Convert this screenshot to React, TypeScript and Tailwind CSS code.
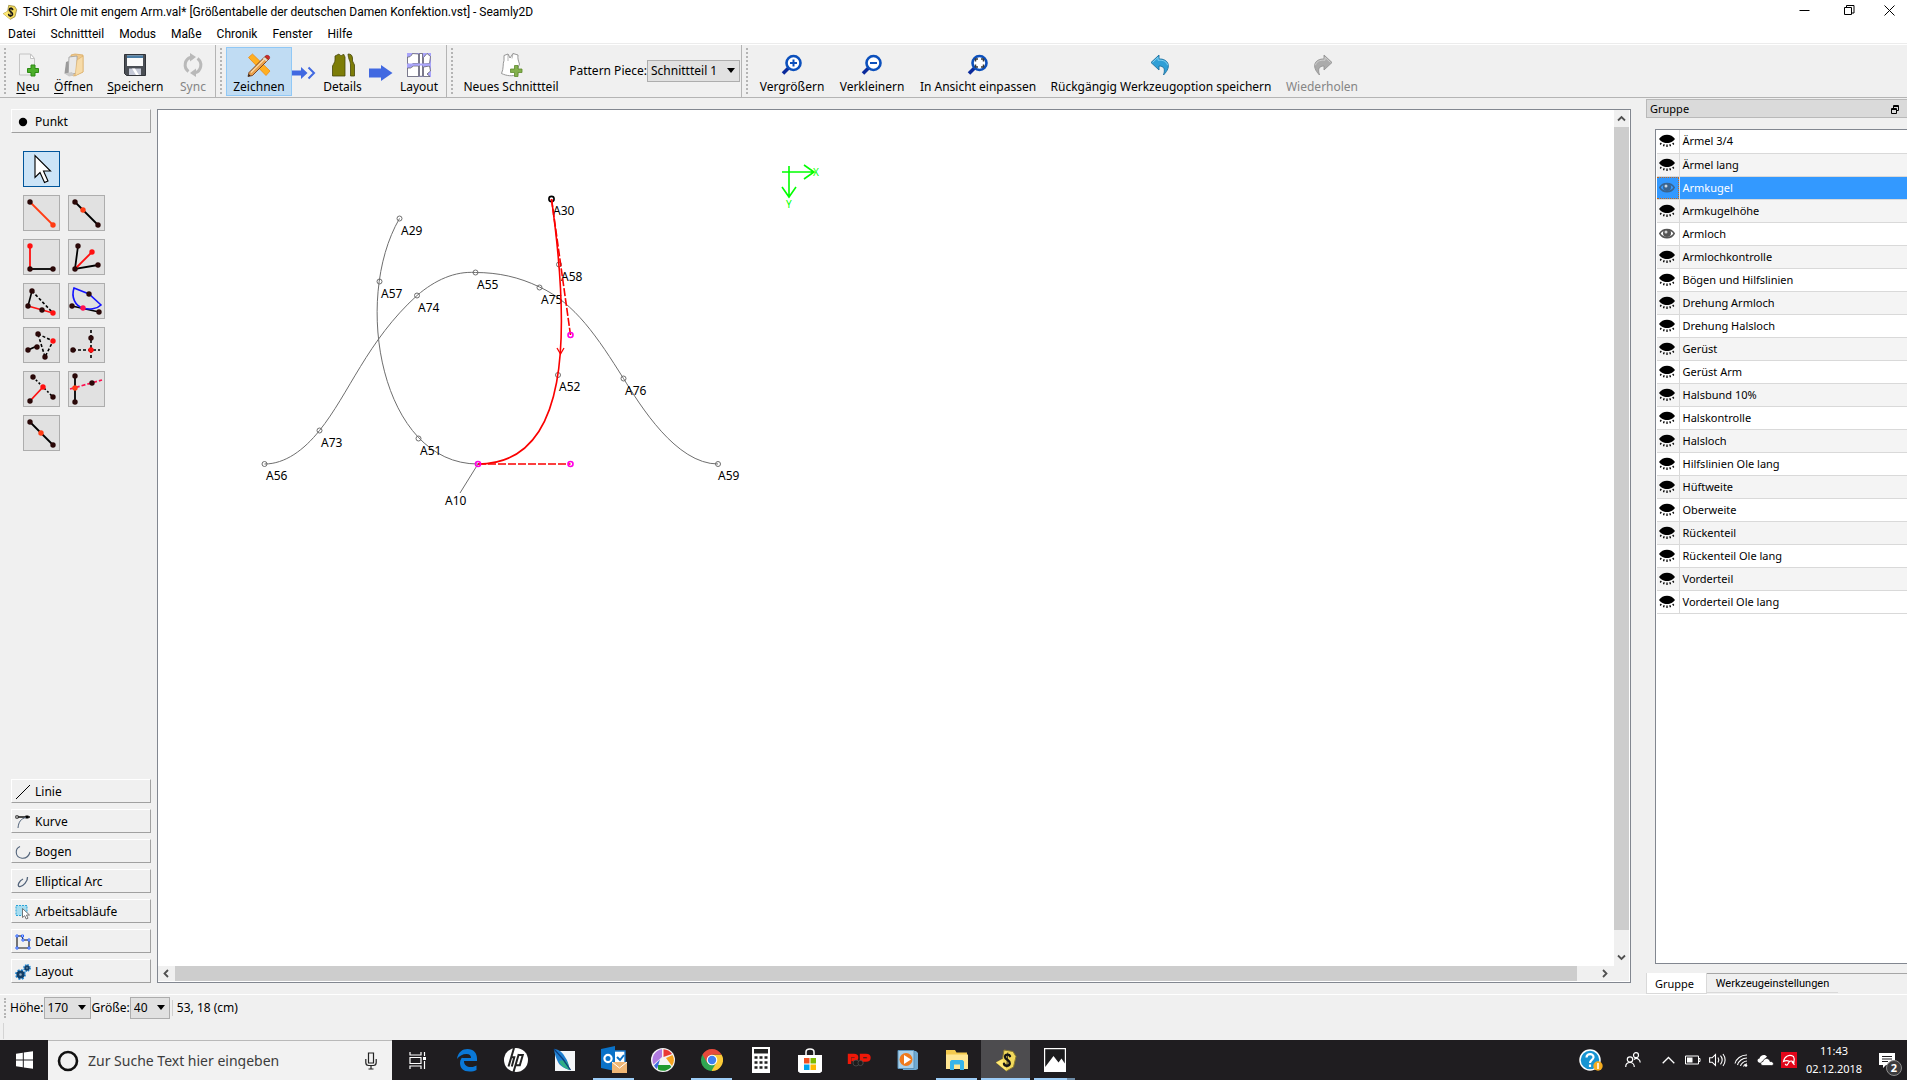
import React from 'react';

type Kids = { children: React.ReactNode };

const RED = '#ff1010';
const DOT = '#2a0808';

/* ---------- small helpers ---------- */

function Svg({ w, h, vb, children }: Kids & { w: number; h: number; vb?: string }) {
  return (
    <svg width={w} height={h} viewBox={vb ?? `0 0 ${w} ${h}`} fill="none" aria-hidden="true" className="shrink-0">
      {children}
    </svg>
  );
}

function Grip({ short = false }: { short?: boolean }) {
  return (
    <span
      className={
        (short ? 'h-5' : 'h-[46px]') +
        ' w-0 shrink-0 border-l-2 border-dotted border-[#b4b4b4]'
      }
    />
  );
}

function Combo({ label, value, options, width }: { label: string; value: string; options: string[]; width: string }) {
  return (
    <label className="flex items-center whitespace-nowrap">
      <span>{label}</span>
      <span className="relative">
        <select
          defaultValue={value}
          className={width + ' block h-[22px] appearance-none rounded-none border border-[#adadad] bg-[#e1e1e1] pl-[3px] text-[12px] leading-4 outline-none'}
        >
          {options.map((o) => (
            <option key={o}>{o}</option>
          ))}
        </select>
        <span className="pointer-events-none absolute top-2 right-[5px] border-x-4 border-t-[5px] border-x-transparent border-t-black" />
      </span>
    </label>
  );
}

/* ---------- logo ---------- */

function SeamlyLogo({ size }: { size: number }) {
  return (
    <Svg w={size} h={size} vb="0 0 24 24">
      <path d="M10 2l9 1.500 3 5-2.500 10.500-7 4-10.500-8.500 6.500-3.500z" fill="#f2d95c" stroke="#8a7a30" strokeWidth="1" />
      <path d="M2 14.500l6.500-3.500 4 12z" fill="#ffe873" />
      <path d="M16 8.200c-.6-2-4.800-2.400-5 .6-.2 2.800 5.200 3.400 4.800 6.600-.4 3.200-5.400 3-5.800.4" stroke="#151515" strokeWidth="2.400" strokeLinecap="round" />
      <path d="M13.800 4.500l-1 15" stroke="#151515" strokeWidth=".8" />
    </Svg>
  );
}

/* ---------- toolbar icons ---------- */

const NewIcon = () => (
  <Svg w={24} h={24}>
    <path d="M3.500 1h11l4 4.500V22h-15z" fill="#f1f1f1" stroke="#c4c4c4" />
    <path d="M14.500 1v4.500h4z" fill="#fff" stroke="#c4c4c4" />
    <path d="M15 12h4v3.500h3.500v4H19V23h-4v-3.500h-3.500v-4H15z" fill="#4caf2a" stroke="#2f8a16" />
  </Svg>
);
const OpenIcon = () => (
  <Svg w={24} h={24}>
    <path d="M9 2l4-1 8 1v17l-9 4-3-1z" fill="#f0c98c" stroke="#d9ab63" strokeWidth=".8" />
    <path d="M7 4l8-1v17l-9 2z" fill="#e9e9e9" stroke="#9c9c9c" strokeWidth=".8" />
    <path d="M4 9l2.500-1v14L2.500 20.500z" fill="#9a9a9a" />
    <path d="M2.500 20.500L10 19l2 3.500-5 1z" fill="#c9c9c9" />
    <path d="M15 7l6-4v16l-8 4z" fill="#f7dba8" stroke="#d9ab63" strokeWidth=".6" />
  </Svg>
);
const SaveIcon = () => (
  <Svg w={24} h={24}>
    <path d="M1.500 1.500h21v21h-19l-2-2z" fill="#4b4f55" stroke="#303338" />
    <path d="M4 2.500h16V13H4z" fill="#fafafa" />
    <path d="M4 2.500h16V5H4z" fill="#4a7da5" />
    <path d="M6 15.500h12V22H6z" fill="#c6cad8" />
    <path d="M9 15.500h3l4 6.500h-3z" fill="#fff" />
  </Svg>
);
const SyncIcon = () => (
  <Svg w={24} h={24}>
    <path d="M7.500 18.500A8 8 0 0 1 10 4.300" stroke="#b9b9b9" strokeWidth="3" />
    <path d="M16.500 5.500A8 8 0 0 1 14 19.700" stroke="#b9b9b9" strokeWidth="3" />
    <path d="M9 0l6 4-6 4.500zM15 15.500L9 20l6 4z" fill="#b9b9b9" />
  </Svg>
);
const DrawIcon = () => (
  <Svg w={24} h={24}>
    <path d="M1.500 4.500l4-3.500L23 18l-4 4.500z" fill="#ffb022" stroke="#f08a10" strokeWidth=".8" />
    <path d="M2 19.500L18 3.500l3.500 3L5.500 22.500 1 23.500z" fill="#e8a04c" stroke="#6e3a1e" strokeWidth=".9" />
    <path d="M4 19.500L18.500 5" stroke="#fce0b0" strokeWidth="1.200" />
    <path d="M18 3.500c1-2 5.500-1.500 4.500 2l-1 1z" fill="#d22a2a" stroke="#8d1717" strokeWidth=".6" />
    <path d="M16.500 4.800l3.500 3" stroke="#dcdcdc" strokeWidth="1.600" />
    <path d="M1 23.500l.8-2.500 1.800 1.800z" fill="#222" />
  </Svg>
);
const DoubleArrow = () => (
  <Svg w={24} h={14}>
    <path d="M0 4.500h9V1l6.500 6L9 13V9.500H0z" fill="#4169e1" />
    <path d="M16.500 1.500L22 7l-5.500 5.500" stroke="#4169e1" strokeWidth="2" />
  </Svg>
);
const SingleArrow = () => (
  <Svg w={24} h={16}>
    <path d="M0 3.500h12V0l11.500 8L12 16v-3.500H0z" fill="#4169e1" />
  </Svg>
);
const DetailsIcon = () => (
  <Svg w={24} h={24}>
    <path d="M1.500 23V13C2.500 11 4 9 4 7V3l4-2c1.500 2 3 2 4.500 0l1.500 3v19zM17 1c3 0 4 1 4.500 4v3l2 4v11h-4V12c0-4-2-5-2.500-11z" fill="#7d7d08" stroke="#47470a" strokeWidth=".8" />
  </Svg>
);
const LayoutIcon = () => (
  <Svg w={24} h={24}>
    <path d="M0 0h24v24H0z" fill="#aaa5fb" />
    <path d="M.5 4c2 .5 4-1 5-3.500L11.500 1v9.500H6c-1.500 2-3.500 1.500-5.500 0zM12.500.5h3v22.800h-3zM.5 15h3l3-2h5v10.500H.5zM16.500 4.500l3.500-4 3.500 3-1 7-6 .5zM16.500 14l6-1 1 5-3.500 3 3 2.500h-6.500z" fill="#fff" stroke="#55555a" strokeWidth=".7" />
    <path d="M.5 11.500h23" stroke="#aaa5fb" strokeWidth="2" />
  </Svg>
);
const PieceIcon = () => (
  <Svg w={24} h={24}>
    <path d="M5 2.500L9 1l2 4 3-4.500 5 1.500c-.5 4 .5 6 1.500 9-2 4-2 8-1.500 10.500-6 2-11 1.500-16.500-1C5 15 3.500 11 5 7.500z" fill="#fff" stroke="#8b8b8b" strokeWidth=".9" />
    <path d="M9 1v7M14 .5l-1 5" stroke="#9a9a9a" strokeWidth=".7" />
    <path d="M15.500 12.500h3.500V16h4v3.500h-4v4h-3.500v-4h-4V16h4z" fill="#83b04c" stroke="#5e8a2b" strokeWidth=".8" />
  </Svg>
);

function Magnifier({ children }: Kids) {
  return (
    <Svg w={22} h={22}>
      <path d="M7.500 14L2 19.500" stroke="#0a2a9c" strokeWidth="3.600" />
      <circle cx="12.500" cy="9" r="7" fill="#fff" stroke="#0c50bc" strokeWidth="2.600" />
      {children}
    </Svg>
  );
}
const ZoomIn = () => (
  <Magnifier>
    <path d="M9 9h7M12.500 5.500v7" stroke="#0c50bc" strokeWidth="2" />
  </Magnifier>
);
const ZoomOut = () => (
  <Magnifier>
    <path d="M9 9h7" stroke="#0c50bc" strokeWidth="2" />
  </Magnifier>
);
const ZoomFit = () => (
  <Magnifier>
    <path d="M8.500 7.500V5H11M14 5h2.500v2.500M16.500 10.500V13H14M11 13H8.500v-2.500" stroke="#3a3a3a" strokeWidth="1.500" />
  </Magnifier>
);
const UndoIcon = () => (
  <Svg w={22} h={22}>
    <path d="M1 8.500L9 1v4c8-.5 14 6.500 4.500 16 2-6 .5-9-4.500-9v4z" fill="#2f9fd6" stroke="#1c6f9f" strokeWidth=".9" />
    <path d="M2.500 8.500L8 3.300V6.200c6-.5 9 2 9.500 5" stroke="#7fd0f2" strokeWidth="1" />
  </Svg>
);
const RedoIcon = () => (
  <Svg w={22} h={22}>
    <path d="M21 8.500L13 1v4C5 4.500-1 11.500 8.500 21c-2-6-.5-9 4.500-9v4z" fill="#ababab" stroke="#939393" strokeWidth=".9" />
    <path d="M19.500 8.500L14 3.300V6.200C8 5.700 5 8.200 4.500 11.200" stroke="#cfcfcf" strokeWidth="1" />
  </Svg>
);

function ToolButton({ icon, label, width, disabled, active, mnemonic }: { icon: React.ReactNode; label: string; width: string; disabled?: boolean; active?: boolean; mnemonic?: boolean }) {
  return (
    <button
      type="button"
      disabled={disabled}
      aria-pressed={active}
      className={
        width +
        ' flex h-[49px] shrink-0 flex-col items-center justify-between border pt-[5px] whitespace-nowrap ' +
        (active ? 'border-[#90c8f6] bg-[#c0dcf3]' : 'border-transparent') +
        (disabled ? ' text-[#858585]' : '')
      }
    >
      <span className="flex h-6 items-center">{icon}</span>
      <span className="h-4 leading-4">
        {mnemonic ? (
          <>
            <span className="underline underline-offset-2">{label[0]}</span>
            {label.slice(1)}
          </>
        ) : (
          label
        )}
      </span>
    </button>
  );
}

/* ---------- left tool box ---------- */

type Pt = [number, number, string?];
function Dots({ pts }: { pts: Pt[] }) {
  return (
    <>
      {pts.map(([x, y, c], i) => (
        <circle key={i} cx={x} cy={y} r="2.700" fill={c ?? DOT} />
      ))}
    </>
  );
}

const pointTools: { name: string; art: React.ReactNode }[] = [
  {
    name: 'Punkt in Abstand und Winkel',
    art: (<><path d="M7 7l23 23" stroke="#ff3c14" strokeWidth="1.800" /><Dots pts={[[7, 7], [30, 30, '#ff3c14']]} /></>),
  },
  {
    name: 'Punkt auf Linie',
    art: (<><path d="M7 7l23 23" stroke="#000" strokeWidth="1.800" /><Dots pts={[[7, 7], [30, 30], [15, 15, '#ff3c14']]} /></>),
  },
  {
    name: 'Senkrechte',
    art: (<><path d="M7 30h23" stroke="#000" strokeWidth="1.800" /><path d="M7 7v23" stroke={RED} strokeWidth="1.800" /><Dots pts={[[7, 7, RED], [7, 30], [30, 30]]} /></>),
  },
  {
    name: 'Winkelhalbierende',
    art: (<><path d="M10 7L7 30l23-4" stroke="#000" strokeWidth="1.800" /><path d="M7 30l17-17" stroke={RED} strokeWidth="1.800" /><Dots pts={[[10, 7], [7, 30], [30, 26], [24, 13, RED]]} /></>),
  },
  {
    name: 'Schulterpunkt',
    art: (<><path d="M9 8L5 23" stroke="#000" strokeWidth="1.600" /><path d="M9 8l21 22" stroke="#000" strokeWidth="1.600" strokeDasharray="3 2" /><path d="M5 23l25 7" stroke={RED} strokeWidth="1.800" /><Dots pts={[[9, 8], [5, 23], [19, 27], [30, 30, RED]]} /></>),
  },
  {
    name: 'Schnittpunkt Bogen und Linie',
    art: (<><path d="M4 23l27 6" stroke="#000" strokeWidth="1.600" /><path d="M6 5l15 6 12 11c-4 4-12 5-18 3C7 23 3 14 6 5z" stroke="#1414ff" strokeWidth="1.600" /><Dots pts={[[4, 23], [31, 29], [21, 11], [15, 25, '#ff1050']]} /></>),
  },
  {
    name: 'Dreieck',
    art: (<><path d="M5 23l9-4" stroke="#000" strokeWidth="1.800" /><path d="M15 7l15 7-8 16z" stroke="#000" strokeWidth="1.600" strokeDasharray="3 2" /><Dots pts={[[5, 23], [14, 20], [15, 7], [22, 30], [30, 14, RED]]} /></>),
  },
  {
    name: 'Schnittpunkt XY',
    art: (<><path d="M5 23h27M23 3v29" stroke="#000" strokeWidth="1.600" strokeDasharray="3 2" /><Dots pts={[[5, 23], [23, 11], [23, 23, RED]]} /></>),
  },
  {
    name: 'Lotpunkt',
    art: (<><path d="M10 6l20 20" stroke="#000" strokeWidth="1.600" strokeDasharray="2 2" /><path d="M7 30l13-14" stroke={RED} strokeWidth="1.800" /><Dots pts={[[10, 6], [30, 26], [7, 30], [20, 16, RED]]} /></>),
  },
  {
    name: 'Schnittpunkt Linie und Achse',
    art: (<><path d="M7 5v26" stroke="#000" strokeWidth="1.800" /><path d="M2 18l32-9" stroke="#ff1050" strokeWidth="1.800" strokeDasharray="4 2" /><Dots pts={[[7, 5], [7, 31], [24, 12], [7, 17, '#ff3c14']]} /></>),
  },
  {
    name: 'Mittelpunkt',
    art: (<><path d="M7 7l23 23" stroke="#000" strokeWidth="1.800" /><Dots pts={[[7, 7], [30, 30], [18, 18, '#ff3c14']]} /></>),
  },
];

const LineIcon = () => <Svg w={16} h={16}><path d="M1 15L15 1" stroke="#000" /></Svg>;
const CurveIcon = () => (
  <Svg w={16} h={16}><path d="M2 3h13" stroke="#000" strokeWidth="1.400" /><path d="M.8 1.800h2.400v2.400H.8z" fill="#fff" stroke="#000" strokeWidth=".8" /><path d="M10.500 1.500h3v3h-3z" fill="#000" /><path d="M11 3.500C6 4.500 3.500 8 3 14" stroke="#52637a" /></Svg>
);
const ArcIcon = () => <Svg w={16} h={16}><path d="M5 2.500C-.5 5 0 13.500 7 14.200c4 .3 7-2.200 8-6.200" stroke="#52637a" strokeWidth="1.100" /></Svg>;
const EllipticalIcon = () => <Svg w={16} h={16}><path d="M8 5C4.500 6.500 1.500 12 4.500 12.500 8 13 13 7 12.500 3" stroke="#52637a" strokeWidth="1.300" /></Svg>;
const OperationsIcon = () => (
  <Svg w={16} h={16}><path d="M1 1.500h11v10H1z" fill="#a5dcf0" stroke="#2aa3d8" strokeDasharray="2 1" /><path d="M7.500 4.500v9l2.200-1.800 1.500 3.300 1.800-.8-1.500-3.200h3z" fill="#fff" stroke="#555" strokeWidth=".8" /></Svg>
);
const DetailIcon = () => (
  <Svg w={16} h={16}><path d="M2 14V2h5l1 4h6v8z" stroke="#111" strokeWidth="1.100" /><path d="M1 1h2v2H1zM6.500 1h2v2h-2zM7 5h2v2H7zM13 5h2v2h-2zM13 13h2v2h-2zM1 13h2v2H1z" fill="#fff" stroke="#2b62ff" /></Svg>
);
const GearsIcon = () => (
  <Svg w={16} h={16}>
    <circle cx="5.500" cy="10.500" r="4.300" stroke="#1c86d6" strokeWidth="2.200" strokeDasharray="1.900 1.480" />
    <circle cx="5.500" cy="10.500" r="2.700" fill="#9ab" stroke="#123f68" strokeWidth="2.800" />
    <circle cx="12" cy="4" r="3" stroke="#1c86d6" strokeWidth="1.800" strokeDasharray="1.500 .85" />
    <circle cx="12" cy="4" r="1.700" fill="#9ab" stroke="#123f68" strokeWidth="1.900" />
  </Svg>
);
const PointIcon = () => <Svg w={16} h={16}><circle cx="8" cy="8" r="4.200" fill="#000" /></Svg>;

function SectionButton({ icon, label, open }: { icon: React.ReactNode; label: string; open?: boolean }) {
  return (
    <button
      type="button"
      aria-expanded={!!open}
      className="flex h-6 w-full shrink-0 items-center gap-1 border border-t-white border-r-[#a0a0a0] border-b-[#a0a0a0] border-l-white pt-px pl-[3px] whitespace-nowrap"
    >
      {icon}
      {label}
    </button>
  );
}

function ToolBox() {
  return (
    <aside className="flex w-[157px] shrink-0 flex-col pt-[11px] pr-1.5 pb-[11px] pl-[11px]">
      <SectionButton icon={<PointIcon />} label="Punkt" open />
      <div className="mt-[18px] grid grid-cols-[37px_37px] gap-2 pl-3">
        <button type="button" aria-label="Auswahl" className="col-span-2 flex h-9 w-[37px] items-center justify-center border border-[#00559b] bg-[#cce4f7]">
          <Svg w={20} h={30}>
            <path d="M3 1.500v22l5-5 4.500 10 3.500-1.600L11.500 17H18.500z" fill="#fff" stroke="#000" strokeWidth="1.100" />
          </Svg>
        </button>
        {pointTools.map((t) => (
          <button key={t.name} type="button" aria-label={t.name} className="flex h-9 w-[37px] items-center justify-center border border-[#adadad] bg-[#e1e1e1]">
            <svg width="35" height="34" viewBox="1 1 35 34" fill="none" aria-hidden="true">{t.art}</svg>
          </button>
        ))}
      </div>
      <div className="mt-auto flex flex-col gap-1.5">
        <SectionButton icon={<LineIcon />} label="Linie" />
        <SectionButton icon={<CurveIcon />} label="Kurve" />
        <SectionButton icon={<ArcIcon />} label="Bogen" />
        <SectionButton icon={<EllipticalIcon />} label="Elliptical Arc" />
        <SectionButton icon={<OperationsIcon />} label="Arbeitsabläufe" />
        <SectionButton icon={<DetailIcon />} label="Detail" />
        <SectionButton icon={<GearsIcon />} label="Layout" />
      </div>
    </aside>
  );
}

/* ---------- pattern drawing ---------- */

const patternPoints: [string, number, number, number, number][] = [
  ['A29', 399.5, 218.5, 401, 235],
  ['A57', 379.5, 281.5, 381, 298],
  ['A74', 417, 295.5, 418, 312],
  ['A55', 475.5, 272.5, 477, 289],
  ['A75', 539.5, 287.5, 541, 304],
  ['A58', 559, 264.5, 561, 281],
  ['A52', 558, 375, 559, 391],
  ['A76', 623.5, 378.5, 625, 395],
  ['A73', 319.5, 430.5, 321, 447],
  ['A51', 418.5, 438.5, 420, 455],
  ['A56', 264.5, 464, 266, 480],
  ['A59', 718, 464, 718, 480],
];

function Drawing() {
  return (
    <svg className="h-full w-full" fill="none" role="img" aria-label="Schnittzeichnung">
      <g transform="translate(-158 -110)">
        <g stroke="#6e6e6e" strokeWidth="1">
          <path d="M399.500 218.500C352 300 381 464 478 464" />
          <path d="M264.500 464C285 464 304 450 319.500 430.500C349 394 367 341 417 295.500C435 280 455 271 475.500 272.500C498 272.500 519 277 539.500 287C575 303 598 338 623.500 378.500C640 405 676 464 718 464" />
          <path d="M478 464L460 493" />
          {patternPoints.map(([n, x, y]) => (
            <circle key={n} cx={x} cy={y} r="2.500" />
          ))}
        </g>
        <g className="text-[12px]" fill="#000">
          {patternPoints.map(([n, , , tx, ty]) => (
            <text key={n} x={tx} y={ty}>{n}</text>
          ))}
          <text x="553" y="215">A30</text>
          <text x="445" y="505">A10</text>
        </g>
        <circle cx="551.500" cy="199" r="2.600" stroke="#000" strokeWidth="1.600" />
        <g stroke="#fa0000" strokeWidth="1.600">
          <path d="M551.500 199L570.500 335M478 464H570.500" strokeDasharray="8 2" />
          <path d="M551.500 199C570.500 335 570.500 464 478 464" />
          <path d="M557 348l3.500 6 3.500-6" strokeWidth="1.300" />
        </g>
        <g stroke="#ff00e6" strokeWidth="1.600">
          <circle cx="570.500" cy="335" r="2.500" />
          <circle cx="570.500" cy="464" r="2.500" />
          <circle cx="478" cy="464" r="2.500" />
        </g>
        <g stroke="#00ff00" strokeWidth="1.600">
          <path d="M782 172h32M804 165l10 7-10 7" />
          <path d="M789 166v31M782 187l7 10 7-10" />
        </g>
        <g className="text-[10px]" fill="#00ff00">
          <text x="813" y="176">X</text>
          <text x="786" y="208">Y</text>
        </g>
      </g>
    </svg>
  );
}

function ArrowGlyph({ d }: { d: string }) {
  return (
    <Svg w={9} h={9}>
      <path d={d} stroke="#505050" strokeWidth="1.800" />
    </Svg>
  );
}

function Canvas() {
  return (
    <section className="mt-[11px] mb-[11px] flex min-w-0 flex-1 flex-col border border-[#828790] bg-white">
      <div className="flex min-h-0 flex-1">
        <div className="min-w-0 flex-1">
          <Drawing />
        </div>
        <div className="mr-px flex w-[15px] shrink-0 flex-col bg-[#f0f0f0]">
          <button type="button" aria-label="Nach oben" className="flex h-[17px] items-center justify-center"><ArrowGlyph d="M1 6.500L4.500 3 8 6.500" /></button>
          <div className="flex-[803] bg-[#cdcdcd]" />
          <div className="flex-[19]" />
          <button type="button" aria-label="Nach unten" className="flex h-[17px] items-center justify-center"><ArrowGlyph d="M1 2.500L4.500 6 8 2.500" /></button>
        </div>
      </div>
      <div className="mr-px mb-px flex h-[15px] shrink-0 bg-[#f0f0f0] pr-4">
        <button type="button" aria-label="Nach links" className="flex w-[17px] items-center justify-center"><ArrowGlyph d="M6 1L2.500 4.500 6 8" /></button>
        <div className="flex-[1403] bg-[#cdcdcd]" />
        <div className="flex-[19]" />
        <button type="button" aria-label="Nach rechts" className="flex w-[17px] items-center justify-center"><ArrowGlyph d="M3 1l3.500 3.500L3 8" /></button>
      </div>
    </section>
  );
}

/* ---------- group dock ---------- */

const ClosedEye = () => (
  <Svg w={16} h={14}>
    <path d="M0 5C3.500-.8 12.500-.8 16 5c-.8 1.200-1.800 2-3 2.700C10 9.500 6 9.500 3 7.700 1.800 7 .8 6.200 0 5z" fill="#000" />
    <path d="M2.300 9L1.200 10.500M5.200 10.200L4.500 12.200M8 10.500V13M10.800 10.200l.7 2M13.700 9l1.100 1.500" stroke="#000" strokeWidth="1.300" />
  </Svg>
);
const OpenEye = ({ color }: { color: string }) => (
  <Svg w={16} h={14}>
    <path d="M.8 6.500C4 1 12 1 15.200 6.500 12 12 4 12 .8 6.500z" stroke={color} strokeWidth="1.500" />
    <circle cx="8" cy="6" r="4" fill={color} />
    <circle cx="7" cy="5" r="1.500" fill="#fff" fillOpacity=".75" />
  </Svg>
);

const groups = [
  'Ärmel 3/4', 'Ärmel lang', 'Armkugel', 'Armkugelhöhe', 'Armloch', 'Armlochkontrolle', 'Bögen und Hilfslinien',
  'Drehung Armloch', 'Drehung Halsloch', 'Gerüst', 'Gerüst Arm', 'Halsbund 10%', 'Halskontrolle', 'Halsloch',
  'Hilfslinien Ole lang', 'Hüftweite', 'Oberweite', 'Rückenteil', 'Rückenteil Ole lang', 'Vorderteil', 'Vorderteil Ole lang',
];

function GroupDock() {
  return (
    <aside className="ml-[15px] flex w-[261px] shrink-0 flex-col pt-px">
      <header className="flex h-[19px] shrink-0 items-center justify-between border border-r-0 border-[#b9b9b9] bg-[#dadada] pt-px pr-2 pl-[3px] text-[11px]">
        <h2>Gruppe</h2>
        <button type="button" aria-label="Andocken">
          <Svg w={8} h={9}>
            <path d="M2.500 3V.5h5v5H6M.5 3.500h5v5h-5z" stroke="#000" />
            <path d="M2 1.500h6M0 4.500h6" stroke="#000" />
          </Svg>
        </button>
      </header>
      <div className="mt-[11px] ml-[9px] flex-1 border border-r-0 border-[#828790] bg-white pl-px">
        <table className="w-full border-collapse text-[11px]">
          <tbody>
            {groups.map((g, i) => {
              const selected = g === 'Armkugel';
              const open = selected || g === 'Armloch';
              return (
                <tr
                  key={g}
                  aria-selected={selected}
                  className={'h-[23px] border-b border-[#d9d9d9] ' + (selected ? 'bg-[#3399ff] text-white' : i % 2 ? 'bg-[#f4f4f4]' : 'bg-white')}
                >
                  <td className="w-[22px] border-r border-[#d9d9d9] p-0">
                    <span className={'flex h-[22px] items-center pl-0.5 ' + (selected ? 'border border-l-0 border-dotted border-[#c06820]' : '')}>
                      {open ? <OpenEye color={selected ? '#3a648f' : '#555555'} /> : <ClosedEye />}
                    </span>
                  </td>
                  <td className="py-0 pr-0 pl-[3px] leading-4">{g}</td>
                </tr>
              );
            })}
          </tbody>
        </table>
      </div>
      <div role="tablist" className="mt-[9px] flex h-[21px] shrink-0 items-start border-t border-[#a6a6a6] text-[11px]">
        <button type="button" role="tab" aria-selected="true" className="-mt-px h-[21px] w-[61px] border border-t-0 border-[#d9d9d9] bg-white pt-0.5 pr-1 leading-4">Gruppe</button>
        <button type="button" role="tab" aria-selected="false" className="h-[19px] w-[131px] border-b border-[#d9d9d9] pt-px font-[Roboto,sans-serif] leading-4">Werkzeugeinstellungen</button>
      </div>
    </aside>
  );
}

/* ---------- taskbar ---------- */

const EdgeIcon = () => (
  <Svg w={22} h={24}>
    <path d="M1 11C2 4 6.500 1 11.500 1 17.500 1 21 5 21 10.500V13H8c0 4 3 6 7 6 2.500 0 4-.7 5.500-1.500V22c-2 1-4 1.500-7 1.500-6 0-9.500-3.500-9.500-8.500 0-3.500 2-6 4.500-7.500C7 8.500 6.500 9 6 10h9c0-2.500-1.500-4-4.500-4C6.500 6 3 8 1 11z" fill="#0a78d7" />
  </Svg>
);
const HpIcon = () => (
  <Svg w={24} h={24}>
    <circle cx="12" cy="12" r="12" fill="#fff" />
    <path d="M10 0L4.500 18.500M7 9.200h3.300L7.800 18.500M14.800 6L9.500 24M14.300 7h4.500l-3 10.300H12" stroke="#222" strokeWidth="2" />
  </Svg>
);
const FeatherIcon = () => (
  <Svg w={24} h={24}>
    <path d="M2 3h20v20H2z" fill="#f4f6f8" />
    <path d="M1 1c5 0 9 4 11 8 3 4 4 8 4.500 13C11 20 7 18 5 14 3 10 1.500 6 1 1z" fill="#1f7fd0" />
    <path d="M6 13c3-1 6-1 8 1 1.500 2 2 5 2.500 8C11 20 8 18 6 13z" fill="#2fae86" />
    <path d="M1 1c5 5 11 12 16.500 21" stroke="#0c3e80" strokeWidth="1.300" />
  </Svg>
);
const OutlookIcon = () => (
  <Svg w={26} h={28}>
    <path d="M12 5h12v13H12z" fill="#fff" stroke="#1a7cd0" strokeWidth="1.400" />
    <path d="M0 3l14-3v25L0 22z" fill="#0a72c8" />
    <circle cx="7" cy="12.500" r="3.600" stroke="#fff" strokeWidth="2.200" />
    <path d="M16 11l3 3 4-5" stroke="#0a72c8" strokeWidth="2" />
    <path d="M11 16h15v11H11z" fill="#f0b775" />
    <path d="M11 16l7.500 6 7.500-6" stroke="#fff" />
  </Svg>
);
const PicasaIcon = () => (
  <Svg w={24} h={24}>
    <circle cx="12" cy="12" r="12" fill="#f4f4f4" />
    <path d="M11 1.200V9L2.500 16.500A10.800 10.800 0 0 1 11 1.200z" fill="#b07ae0" />
    <path d="M12.500 1.200A10.800 10.800 0 0 1 21 6L12.500 9z" fill="#ea3a34" />
    <path d="M21.500 7a10.800 10.800 0 0 1-.5 11l-6-8z" fill="#f5a31f" />
    <path d="M20.300 19A10.800 10.800 0 0 1 7 21.600V17h12z" fill="#1f9a2e" />
    <path d="M6 21A10.800 10.800 0 0 1 3 17.500l6-6z" fill="#3d6de0" />
  </Svg>
);
const ChromeIcon = () => (
  <Svg w={22} h={24}>
    <path d="M11 12V6.500h9.500A11 11 0 0 1 10.500 23z" fill="#fbcb38" />
    <path d="M11 12L1.500 6.500A11 11 0 0 0 10.500 23l4.700-8.300z" fill="#30a652" />
    <path d="M1.500 6.500a11 11 0 0 1 19 0H11V12l-4.800 2.700z" fill="#e64a3c" />
    <circle cx="11" cy="12" r="5.300" fill="#fff" />
    <circle cx="11" cy="12" r="4.200" fill="#3f80f0" />
  </Svg>
);
const CalculatorIcon = () => (
  <Svg w={18} h={26}>
    <path d="M0 0h18v26H0z" fill="#fff" />
    <path d="M2 2h14v4.500H2z" fill="#222" />
    <path d="M2.500 10.500h13M2.500 15.500h13M2.500 20.500h13" stroke="#222" strokeWidth="2.600" strokeDasharray="3 2" />
  </Svg>
);
const StoreIcon = () => (
  <Svg w={24} h={25}>
    <path d="M8 7V4c0-4 8-4 8 0v3" stroke="#fff" strokeWidth="1.500" />
    <path d="M0 7h24v16.500l-2 1.500H2l-2-1.500z" fill="#fff" />
    <path d="M6 10h5.500v5.500H6z" fill="#f25022" /><path d="M12.500 10H18v5.500h-5.500z" fill="#7fba00" />
    <path d="M6 16.500h5.500V22H6z" fill="#00a4ef" /><path d="M12.500 16.500H18V22h-5.500z" fill="#ffb900" />
  </Svg>
);
const RpIcon = () => (
  <Svg w={24} h={14}>
    <path d="M2.500 11V2.500h4.500c3.500 0 3.500 4 0 4H4.500M7 6.500l4 4.500M14.500 11V2.500H19c4 0 4 4.500 0 4.500h-3" stroke="#f01808" strokeWidth="3.400" />
    <circle cx="9" cy="10" r="3" fill="#1c1c1c" stroke="#555" strokeWidth=".7" /><circle cx="13.500" cy="10" r="2.600" fill="#1c1c1c" stroke="#555" strokeWidth=".7" />
  </Svg>
);
const MediaIcon = () => (
  <Svg w={22} h={22}>
    <path d="M4 2h15l2 2v16l-2 1H6z" fill="#6fa9d0" /><path d="M1 1.500h16v18H1z" fill="#a8d0ea" stroke="#5b93bb" />
    <circle cx="9" cy="10.500" r="6.500" fill="#f07a1c" /><path d="M7 6v9l7-4.500z" fill="#fff" />
  </Svg>
);
const FolderIcon = () => (
  <Svg w={24} h={22}>
    <path d="M1 1h9l1.500 2.500H22V20H1z" fill="#f3c94e" /><path d="M1 5.500h22V20H1z" fill="#ffe693" />
    <path d="M5 21v-8.500l1.500-1.500h11l1.500 1.500V21h-4v-5.500H9V21z" fill="#38b4ea" />
  </Svg>
);
const PhotosIcon = () => (
  <Svg w={22} h={24}>
    <path d="M0 0h22v24H0z" fill="#fff" /><path d="M1.200 1.200h19.600V15.500L17.500 10.500l-3 4L9.500 8 1.200 19z" fill="#1b1b1d" />
  </Svg>
);
const TaskViewIcon = () => (
  <Svg w={17} h={17}>
    <path d="M1 0v3h11V0M1 17v-3h11v3M1 5.500h11v6H1zM15.500 0v4M15.500 9v8" stroke="#fff" strokeWidth="1.200" /><path d="M14 5h3v3h-3z" fill="#fff" />
  </Svg>
);

const apps: { name: string; icon: React.ReactNode; state?: 'open' | 'active' | 'stack' }[] = [
  { name: 'Aufgabenansicht', icon: <TaskViewIcon /> },
  { name: 'Microsoft Edge', icon: <EdgeIcon /> },
  { name: 'HP', icon: <HpIcon /> },
  { name: 'Photo Editor', icon: <FeatherIcon /> },
  { name: 'Outlook', icon: <OutlookIcon />, state: 'open' },
  { name: 'Picasa', icon: <PicasaIcon /> },
  { name: 'Chrome', icon: <ChromeIcon />, state: 'open' },
  { name: 'Rechner', icon: <CalculatorIcon /> },
  { name: 'Store', icon: <StoreIcon /> },
  { name: 'RP', icon: <RpIcon /> },
  { name: 'Media Player', icon: <MediaIcon /> },
  { name: 'Explorer', icon: <FolderIcon />, state: 'open' },
  { name: 'Seamly2D', icon: <SeamlyLogo size={24} />, state: 'active' },
  { name: 'Fotos', icon: <PhotosIcon />, state: 'stack' },
];

function TrayButton({ name, children, width }: Kids & { name: string; width: string }) {
  return (
    <button type="button" aria-label={name} className={width + ' flex h-full items-center justify-center'}>
      {children}
    </button>
  );
}

function Taskbar() {
  return (
    <footer className="flex h-10 shrink-0 items-stretch bg-[#1f1d20] text-white">
      <button type="button" aria-label="Start" className="flex w-12 items-center justify-center">
        <Svg w={17} h={18}>
          <path d="M0 2.700L6.800 1.700v6.800H0zM7.800 1.500L17 .2v8.300H7.800zM0 9.500h6.800v6.800L0 15.300zM7.800 9.500H17v8.300l-9.200-1.300z" fill="#fff" />
        </Svg>
      </button>
      <label className="flex w-[344px] items-center border-t border-[#b9b9b9] bg-[#f2f2f2] pr-[15px] pl-[9px] text-[#3c3c3c]">
        <Svg w={22} h={22}><circle cx="11" cy="11" r="9" stroke="#111" strokeWidth="2.600" /></Svg>
        <input
          type="text"
          aria-label="Suche"
          placeholder="Zur Suche Text hier eingeben"
          className="ml-[9px] min-w-0 flex-1 bg-transparent text-[14px] outline-none placeholder:text-[#3c3c3c]"
        />
        <Svg w={12} h={18}><path d="M3.500 1h5v10h-5zM.8 7v3.500c0 2 1 3 2.700 3h5c1.700 0 2.700-1 2.700-3V7M6 13.500V17M3.500 17h5" stroke="#222" strokeWidth="1.200" /></Svg>
      </label>
      <nav className="flex pl-px">
        {apps.map((a) => (
          <button
            key={a.name}
            type="button"
            aria-label={a.name}
            className={'relative flex w-[49px] items-center justify-center ' + (a.state === 'active' ? 'bg-[#4d4c4f]' : '')}
          >
            {a.icon}
            {a.state === 'open' && <span className="absolute inset-x-1 bottom-0 h-0.5 bg-[#9cccf6]" />}
            {a.state === 'active' && <span className="absolute inset-x-0 bottom-0 h-0.5 bg-[#9cccf6]" />}
            {a.state === 'stack' && <span className="absolute inset-x-1 bottom-0 h-0.5 border-r-8 border-[#6d8ba6] bg-[#9cccf6]" />}
          </button>
        ))}
      </nav>
      <div className="ml-auto flex items-center">
        <TrayButton name="Hilfe" width="w-10">
          <Svg w={24} h={22}>
            <circle cx="11" cy="11" r="10" fill="#1794d2" stroke="#fff" strokeWidth="1.500" />
            <path d="M7.500 8.500c0-4.500 7.500-4.500 7 0-.3 2.500-3.500 2.500-3.500 5.500M11 15.500v2.500" stroke="#fff" strokeWidth="2.200" />
            <circle cx="19" cy="17" r="4.700" fill="#f5ac1e" /><path d="M19 14v6" stroke="#fff" strokeWidth="1.500" />
          </Svg>
        </TrayButton>
        <TrayButton name="Kontakte" width="w-11">
          <Svg w={16} h={16}>
            <circle cx="5" cy="7.500" r="2.700" stroke="#fff" strokeWidth="1.200" /><path d="M.7 15c0-6 8.600-6 8.600 0" stroke="#fff" strokeWidth="1.200" />
            <circle cx="11" cy="3.200" r="2.500" stroke="#fff" strokeWidth="1.200" /><path d="M9 7.500c3-2.500 6.200 0 6.200 3" stroke="#fff" strokeWidth="1.200" />
          </Svg>
        </TrayButton>
        <TrayButton name="Ausgeblendete Symbole" width="w-[26px]">
          <Svg w={13} h={8}><path d="M.7 7.300L6.500 1.500l5.800 5.800" stroke="#fff" strokeWidth="1.300" /></Svg>
        </TrayButton>
        <TrayButton name="Akku" width="w-6">
          <Svg w={16} h={10}><path d="M.5 1h13v8H.5zM13.500 3.500H15v3h-1.500" stroke="#fff" /><path d="M2 2.500h5.500v5H2z" fill="#fff" /></Svg>
        </TrayButton>
        <TrayButton name="Lautstärke" width="w-6">
          <Svg w={17} h={14}><path d="M.6 4.800h2.500L6.500 1.500v11L3.100 9.200H.6zM9 4.500c1 1.500 1 3.500 0 5M11.500 2.700c2 2.500 2 6 0 8.600M14 1c2.800 3.500 2.800 8.500 0 12" stroke="#fff" strokeWidth="1.100" /></Svg>
        </TrayButton>
        <TrayButton name="WLAN" width="w-6">
          <Svg w={14} h={13}><path d="M1 9.500C2 5 7 .8 13 1M3.500 11C4.500 7 8.500 4 13 4M6.500 12C7 9.500 10 7 13 7M9.500 12.500C10 11 11.500 10 13 9.800" stroke="#fff" strokeWidth="1.100" /><circle cx="12" cy="11.500" r="1.300" fill="#fff" /></Svg>
        </TrayButton>
        <TrayButton name="OneDrive" width="w-6">
          <Svg w={17} h={12}><path d="M4 9C0 9-.5 5 2.500 4.500 3 1 8-.5 10 2.500" fill="#fff" /><path d="M6 11.500c-3 0-3-4 0-4 .5-4 6.500-4 7 0 4-.5 4.500 4 1.500 4z" fill="#fff" stroke="#1f1d20" strokeWidth=".7" /></Svg>
        </TrayButton>
        <TrayButton name="Avira" width="w-6">
          <Svg w={16} h={16}><path d="M0 0h16v16H0z" fill="#e2061a" /><path d="M2.500 9.500C3.500 4 8.500 2 12.500 4.500c1.200 2 1 4.500.3 6.500-1.200-2-2.800-2.500-4.300-1.500C6.500 8.300 4.500 8.500 2.500 9.500zM8.500 9.500l-2 3c-1 1.200-2.500.5-2-.8M11 9.800l2.500 3" stroke="#fff" strokeWidth="1.200" /></Svg>
        </TrayButton>
        <time className="flex w-[66px] flex-col items-center text-[11px] leading-[18px]">
          <span>11:43</span>
          <span>02.12.2018</span>
        </time>
        <TrayButton name="Benachrichtigungen" width="w-10">
          <span className="relative">
            <Svg w={16} h={15}><path d="M0 0h16v12H7l-3 3v-3H0z" fill="#fff" /><path d="M3 3.500h10M3 6h10M3 8.500h6" stroke="#1f1d20" strokeWidth="1.200" /></Svg>
            <span className="absolute top-[7px] left-[7px] flex size-4 items-center justify-center rounded-full border border-[#8e8e8e] bg-[#3c3b3d] text-[11px] leading-none font-bold">2</span>
          </span>
        </TrayButton>
      </div>
    </footer>
  );
}

/* ---------- window ---------- */

const menus = ['Datei', 'Schnittteil', 'Modus', 'Maße', 'Chronik', 'Fenster', 'Hilfe'];

export default function App() {
  return (
    <div className="flex min-h-screen flex-col bg-[#f0f0f0] font-['Noto_Sans','Open_Sans',sans-serif] text-[12px] leading-4 text-black">
      <header className="bg-white font-[Roboto,'Noto_Sans',sans-serif]">
        <div className="flex h-6 items-center pl-0.5">
          <SeamlyLogo size={16} />
          <h1 className="ml-[5px]">T-Shirt Ole mit engem Arm.val* [Größentabelle der deutschen Damen Konfektion.vst] - Seamly2D</h1>
          <div className="ml-auto flex items-center pb-1">
            <button type="button" aria-label="Minimieren" className="flex w-[45px] justify-center"><Svg w={11} h={11}><path d="M.5 5.500h10" stroke="#000" /></Svg></button>
            <button type="button" aria-label="Wiederherstellen" className="flex w-[45px] justify-center"><Svg w={11} h={11}><path d="M.5 2.500h7v7h-7zM2.500 2.500v-2h7.500v7.500H8" stroke="#000" /></Svg></button>
            <button type="button" aria-label="Schließen" className="flex w-[35px] justify-center"><Svg w={11} h={11}><path d="M.5.5l10 10M10.500.5l-10 10" stroke="#000" /></Svg></button>
          </div>
        </div>
        <nav className="flex h-5 items-center gap-[15px] border-b border-[#ececec] pl-2">
          {menus.map((m) => (
            <button key={m} type="button" className="whitespace-nowrap">{m}</button>
          ))}
        </nav>
      </header>

      <div className="flex h-[54px] shrink-0 items-stretch border-t border-b border-t-white border-b-[#b4b4b4]">
        <div className="flex w-[216px] shrink-0 items-center border-r border-[#b4b4b4] pl-1">
          <Grip />
          <div className="flex flex-1 items-center justify-between pr-1 pl-0.5">
            <ToolButton icon={<NewIcon />} label="Neu" width="w-10" mnemonic />
            <ToolButton icon={<OpenIcon />} label="Öffnen" width="w-11" mnemonic />
            <ToolButton icon={<SaveIcon />} label="Speichern" width="w-[72px]" mnemonic />
            <ToolButton icon={<SyncIcon />} label="Sync" width="w-9" disabled />
          </div>
        </div>
        <div className="flex w-[231px] shrink-0 items-center border-r border-[#b4b4b4] pl-1">
          <Grip />
          <div className="flex flex-1 items-center pl-1">
            <ToolButton icon={<DrawIcon />} label="Zeichnen" width="w-[66px]" active />
            <span className="pt-1"><DoubleArrow /></span>
            <ToolButton icon={<DetailsIcon />} label="Details" width="w-[53px]" />
            <span className="pt-1"><SingleArrow /></span>
            <ToolButton icon={<LayoutIcon />} label="Layout" width="w-[52px]" />
          </div>
        </div>
        <div className="flex w-[295px] shrink-0 items-center border-r border-[#b4b4b4] pl-1">
          <Grip />
          <div className="flex flex-1 items-center justify-between pr-px pl-[7px]">
            <ToolButton icon={<PieceIcon />} label="Neues Schnittteil" width="w-[102px]" />
            <Combo label="Pattern Piece:" value="Schnittteil 1" options={['Schnittteil 1']} width="w-[93px]" />
          </div>
        </div>
        <div className="flex items-center pl-1">
          <Grip />
          <div className="flex items-center pl-1">
            <ToolButton icon={<ZoomIn />} label="Vergrößern" width="w-20" />
            <ToolButton icon={<ZoomOut />} label="Verkleinern" width="w-20" />
            <ToolButton icon={<ZoomFit />} label="In Ansicht einpassen" width="w-[132px]" />
            <ToolButton icon={<UndoIcon />} label="Rückgängig Werkzeugoption speichern" width="w-[234px]" />
            <ToolButton icon={<RedoIcon />} label="Wiederholen" width="w-[88px]" disabled />
          </div>
        </div>
      </div>

      <main className="flex flex-1">
        <ToolBox />
        <Canvas />
        <GroupDock />
      </main>

      <div className="flex h-[46px] shrink-0 flex-col border-t border-white">
        <div className="flex h-[26px] items-center pl-1">
          <Grip short />
          <span className="ml-1 flex items-center gap-px">
            <Combo label="Höhe:" value="170" options={['164', '170', '176']} width="w-[47px]" />
            <Combo label="Größe:" value="40" options={['38', '40', '42']} width="w-10" />
          </span>
          <output className="ml-0.5 border-l border-[#cfcfcf] pl-1">53, 18 (cm)</output>
        </div>
        <div className="mt-0.5 ml-[3px] h-4 w-px bg-[#d4d4d4]" />
      </div>

      <Taskbar />
    </div>
  );
}
